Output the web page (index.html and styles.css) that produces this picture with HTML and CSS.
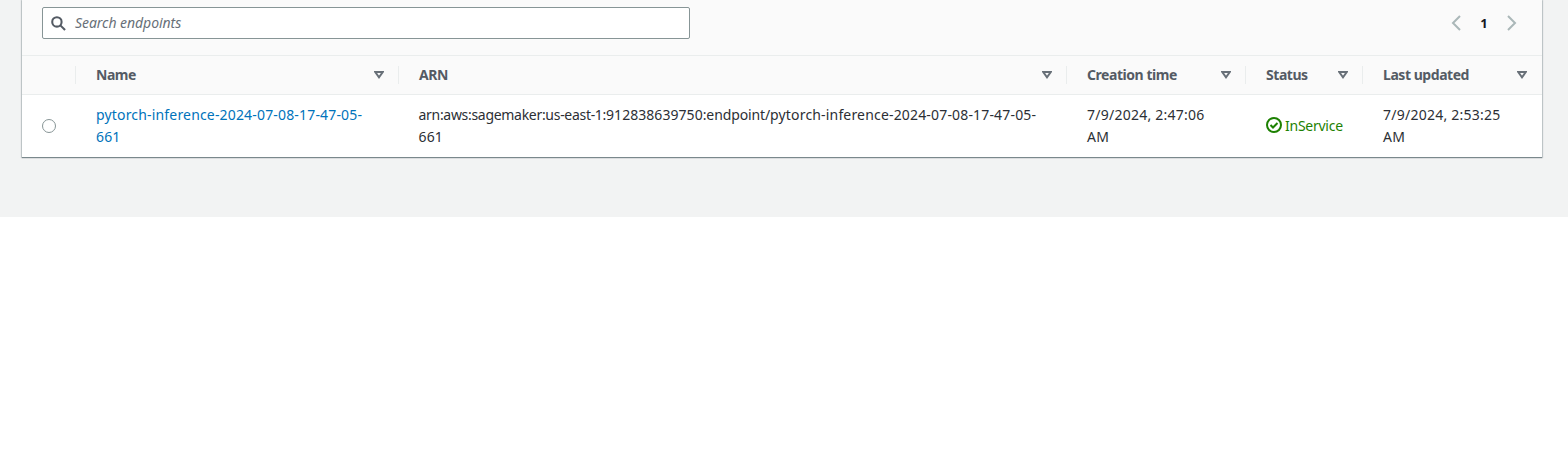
FILE: index.html
```
<!DOCTYPE html>
<html lang="en">
<head>
<meta charset="utf-8">
<title>Endpoints</title>
<link rel="stylesheet" href="styles.css">
</head>
<body>
<main class="page">
  <section class="card">
    <div class="toolbar">
      <div class="search">
        <svg class="search-icon" viewBox="0 0 16 16"><circle cx="6.3" cy="6.3" r="5"/><path d="M10 10l5 5"/></svg>
        <span class="placeholder">Search endpoints</span>
      </div>
      <nav class="pager">
        <svg class="chevron" viewBox="0 0 10 16"><path d="M9 1L2 8l7 7"/></svg>
        <span class="page-number">1</span>
        <svg class="chevron" viewBox="0 0 10 16"><path d="M1 1l7 7-7 7"/></svg>
      </nav>
    </div>
    <div class="row head">
      <div class="cell"></div>
      <div class="cell"><span>Name</span><svg class="sort" viewBox="0 0 10 8"><path d="M1.2 1h7.6L5 6.3z"/></svg></div>
      <div class="cell"><span>ARN</span><svg class="sort" viewBox="0 0 10 8"><path d="M1.2 1h7.6L5 6.3z"/></svg></div>
      <div class="cell"><span>Creation time</span><svg class="sort" viewBox="0 0 10 8"><path d="M1.2 1h7.6L5 6.3z"/></svg></div>
      <div class="cell"><span>Status</span><svg class="sort" viewBox="0 0 10 8"><path d="M1.2 1h7.6L5 6.3z"/></svg></div>
      <div class="cell"><span>Last updated</span><svg class="sort" viewBox="0 0 10 8"><path d="M1.2 1h7.6L5 6.3z"/></svg></div>
    </div>
    <div class="row body">
      <div class="cell pick"><span class="radio"></span></div>
      <div class="cell link">pytorch-inference-2024-07-08-17-47-05-<br>661</div>
      <div class="cell arn"><span class="arn-prefix">arn:aws:sagemaker:us-east-1:</span><span class="arn-account">912838639750</span><span class="arn-type">:endpoint/</span>pytorch-inference-2024-07-08-17-47-05-<br>661</div>
      <div class="cell date">7/9/2024, 2:47:06<br>AM</div>
      <div class="cell status"><svg class="ok" viewBox="0 0 16 16"><circle cx="8" cy="8" r="7"/><path d="M4.5 8l2.5 2.5 4.5-4.5"/></svg><span>InService</span></div>
      <div class="cell date">7/9/2024, 2:53:25<br>AM</div>
    </div>
  </section>
</main>
</body>
</html>
```
FILE: styles.css
```
body { margin: 0; background: #fff; font: 14px/22px "Noto Sans", sans-serif; color: #16191f; }
.page { box-sizing: border-box; height: 217px; padding: 0 26px 0 22px; background: #f2f3f3; }
.card { height: 157px; background: #fff; box-shadow: 0 1px 1px rgba(0,28,36,.4), 0 0 1px 1px rgba(0,28,36,.16); }
.toolbar { box-sizing: border-box; height: 55px; padding: 7px 25px 0 20px; display: flex; justify-content: space-between; align-items: flex-start; background: #fafafa; }
.search { box-sizing: border-box; width: 648px; height: 32px; display: flex; align-items: center; gap: 9px; padding-left: 8px; border: 1px solid #879596; border-radius: 2px; background: #fff; }
.search-icon { width: 15px; height: 15px; fill: none; stroke: #545b64; stroke-width: 2.2; }
.placeholder { font-style: italic; color: #687078; letter-spacing: -.05px; }
.pager { height: 32px; display: flex; align-items: center; }
.chevron { width: 10px; height: 16px; fill: none; stroke: #aab7b8; stroke-width: 2; }
.page-number { width: 46px; text-align: center; font-weight: 700; font-size: 13px; }
.row { display: grid; grid-template-columns: 53px 323px 668px 179px 117px 180px; }
.head { box-sizing: border-box; height: 40px; padding: 10px 0; border-top: 1px solid #eaeded; border-bottom: 1px solid #eaeded; background: #fafafa; font-weight: 700; letter-spacing: -.45px; color: #545b64; }
.head .cell { box-sizing: border-box; height: 18px; display: flex; align-items: center; justify-content: space-between; padding: 0 14px 0 20px; border-left: 1px solid #eaeded; }
.head .cell:first-child { border-left: 0; }
.head .cell:last-child { padding-right: 15px; }
.sort { width: 10px; height: 8px; fill: none; stroke: #687078; stroke-width: 2; }
.body { height: 62px; align-items: center; color: #2c2f35; }
.body .cell { padding-left: 21px; white-space: nowrap; }
.body .pick { padding-left: 20px; }
.body .arn { padding-left: 20.5px; }
.radio { box-sizing: border-box; display: block; width: 14px; height: 14px; border: 1px solid #879596; border-radius: 50%; }
.link, .arn { letter-spacing: .17px; }
.arn-prefix { letter-spacing: -.3px; }
.arn-account { letter-spacing: .05px; }
.arn-type { letter-spacing: -.12px; }
.date { letter-spacing: .24px; }
.link { color: #0073bb; }
.status { display: flex; align-items: center; gap: 3px; color: #1d8102; letter-spacing: -.25px; }
.ok { width: 16px; height: 16px; margin-bottom: 2px; fill: none; stroke: #1d8102; stroke-width: 2; }
```
